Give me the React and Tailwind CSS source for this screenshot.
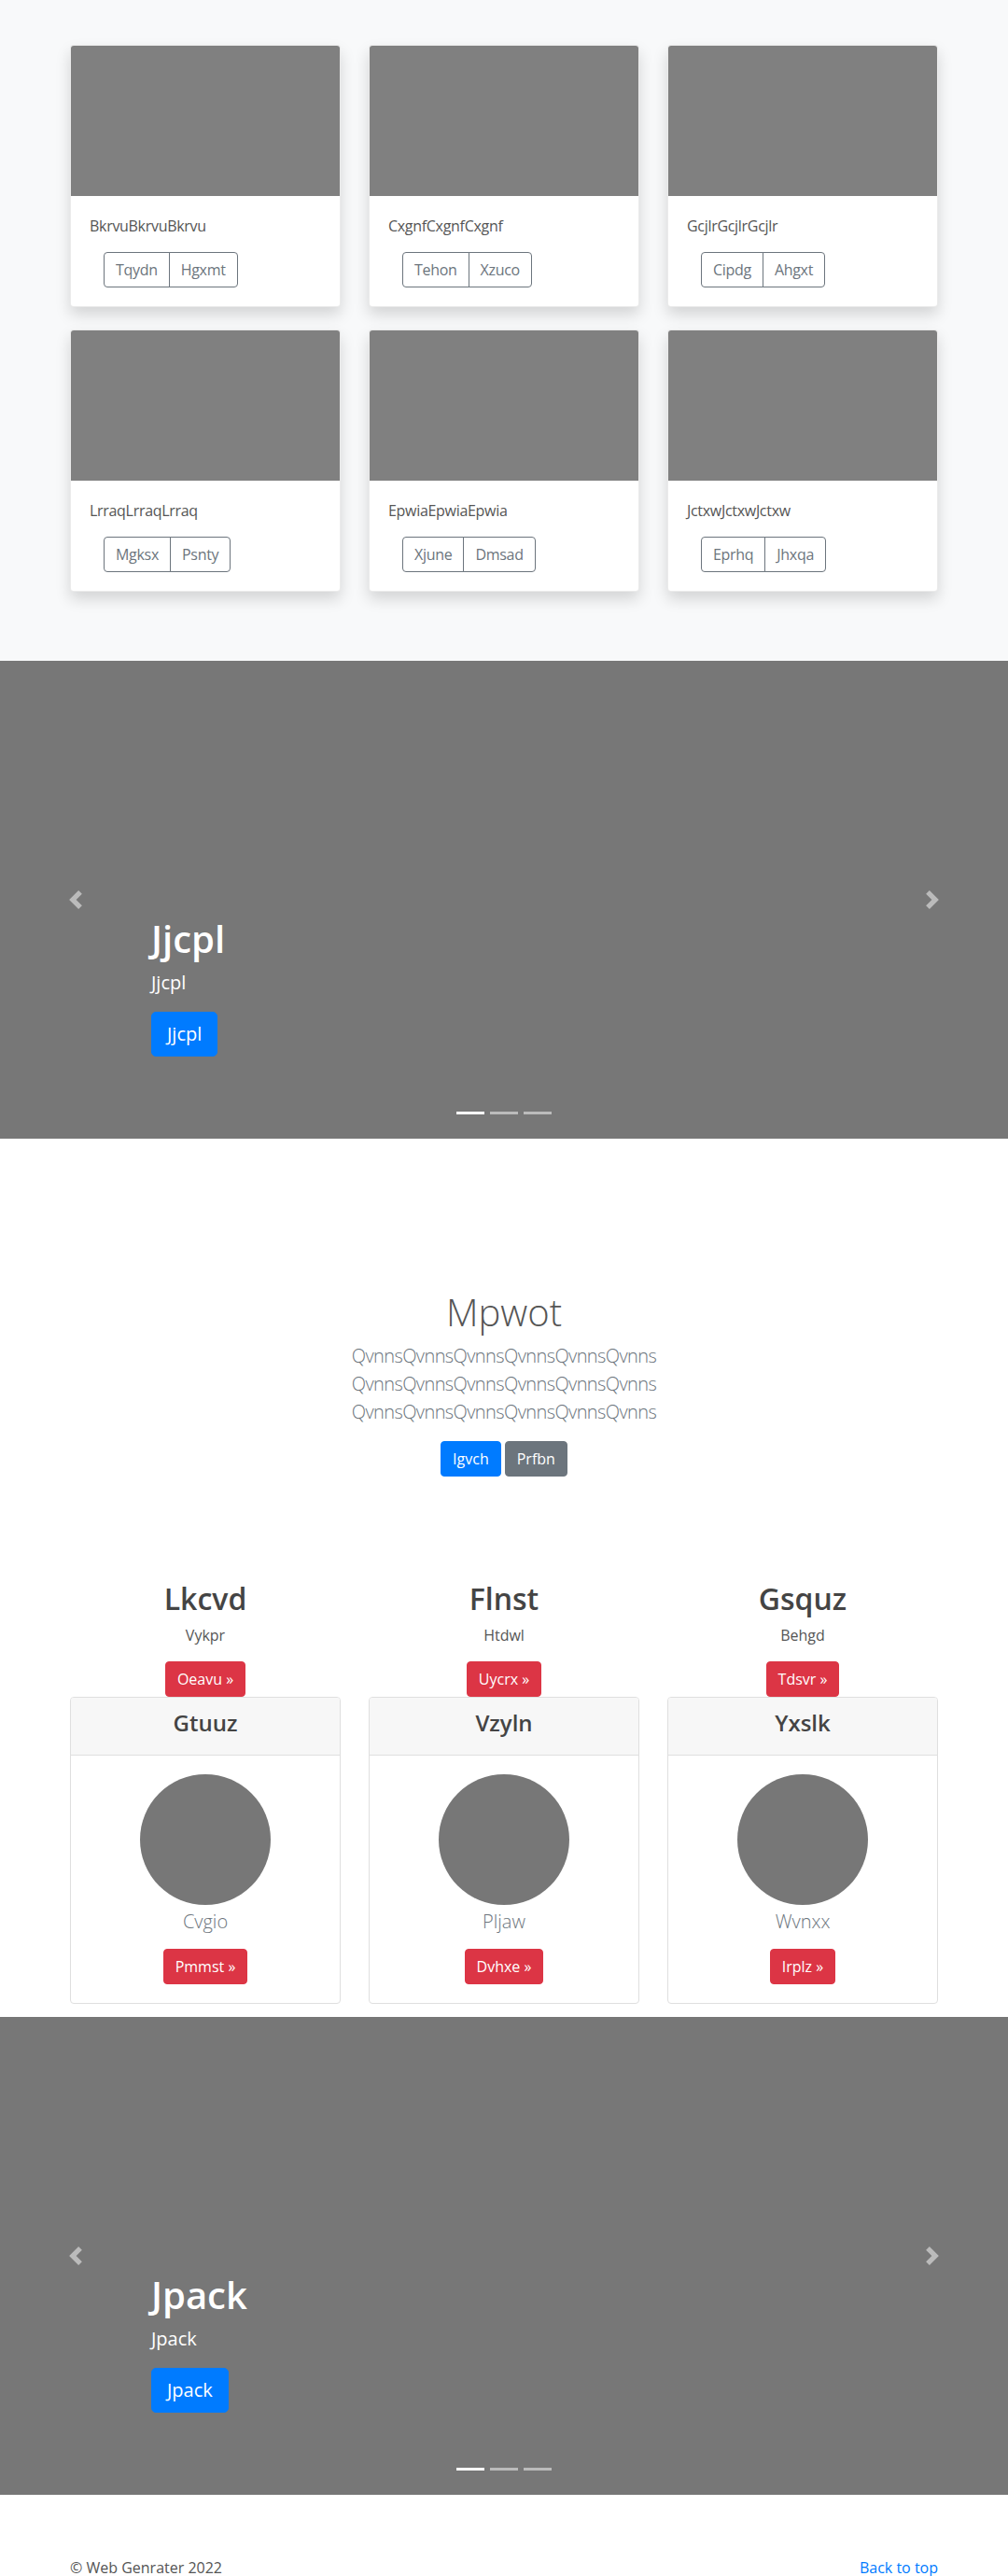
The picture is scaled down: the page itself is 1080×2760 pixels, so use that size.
import React from "react";

const albumCards = [
  { text: "BkrvuBkrvuBkrvu", a: "Tqydn", b: "Hgxmt" },
  { text: "CxgnfCxgnfCxgnf", a: "Tehon", b: "Xzuco" },
  { text: "GcjlrGcjlrGcjlr", a: "Cipdg", b: "Ahgxt" },
  { text: "LrraqLrraqLrraq", a: "Mgksx", b: "Psnty" },
  { text: "EpwiaEpwiaEpwia", a: "Xjune", b: "Dmsad" },
  { text: "JctxwJctxwJctxw", a: "Eprhq", b: "Jhxqa" },
];

const features = [
  { title: "Lkcvd", sub: "Vykpr", btn: "Oeavu", head: "Gtuuz", name: "Cvgio", btn2: "Pmmst" },
  { title: "Flnst", sub: "Htdwl", btn: "Uycrx", head: "Vzyln", name: "Pljaw", btn2: "Dvhxe" },
  { title: "Gsquz", sub: "Behgd", btn: "Tdsvr", head: "Yxslk", name: "Wvnxx", btn2: "Irplz" },
];

const AlbumCard = ({ text, a, b }) => (
  <div className="bg-white rounded-[4px] border border-black/[0.08] shadow-[0_8px_16px_rgba(0,0,0,0.15)] overflow-hidden">
    <div className="h-[161px] bg-[#808080]" />
    <div className="p-5">
      <p className="text-base leading-6 mb-4 text-[#555] tracking-[-0.3px]">{text}</p>
      <div className="ml-[15px] inline-flex">
        <button className="px-3 py-[6px] text-base leading-6 text-[#6c757d] border border-[#6c757d] rounded-l-[4px] tracking-[-0.3px]">
          {a}
        </button>
        <button className="-ml-px px-3 py-[6px] text-base leading-6 text-[#6c757d] border border-[#6c757d] rounded-r-[4px] tracking-[-0.3px]">
          {b}
        </button>
      </div>
    </div>
  </div>
);

const Chevron = ({ dir }) => (
  <svg width="20" height="20" viewBox="0 0 8 8" fill="#fff" className="opacity-50">
    {dir === "prev" ? (
      <path d="M5.25 0l-4 4 4 4 1.5-1.5L4.25 4l2.5-2.5L5.25 0z" />
    ) : (
      <path d="M2.75 0l-1.5 1.5L3.75 4l-2.5 2.5L2.75 8l4-4-4-4z" />
    )}
  </svg>
);

const Carousel = ({ title }) => (
  <div className="relative h-[512px] bg-[#777] overflow-hidden">
    <div className="absolute left-0 top-0 bottom-0 w-[15%] flex items-center justify-center">
      <Chevron dir="prev" />
    </div>
    <div className="absolute right-0 top-0 bottom-0 w-[15%] flex items-center justify-center">
      <Chevron dir="next" />
    </div>
    <div className="absolute left-[15%] right-[15%] bottom-[88px] text-white">
      <h1 className="text-[40px] leading-[48px] font-semibold mb-2">{title}</h1>
      <p className="text-xl leading-[30px] mb-4">{title}</p>
      <a className="inline-block px-4 py-2 text-xl leading-[30px] bg-[#007bff] text-white rounded-[5px] border border-[#007bff]">
        {title}
      </a>
    </div>
    <div className="absolute left-0 right-0 bottom-[26px] flex justify-center gap-[6px]">
      <span className="w-[30px] h-[3px] bg-white" />
      <span className="w-[30px] h-[3px] bg-white/50" />
      <span className="w-[30px] h-[3px] bg-white/50" />
    </div>
  </div>
);

export default function App() {
  return (
    <div className="w-[1080px] bg-white text-[#555]" style={{ fontFamily: '"Open Sans", "Noto Sans", sans-serif' }}>
      {/* album */}
      <section className="bg-[#f8f9fa] pt-12 pb-[50px]">
        <div className="w-[960px] mx-auto px-[15px] grid grid-cols-3 gap-x-[30px] gap-y-[24px] pb-[24px]">
          {albumCards.map((c) => (
            <AlbumCard key={c.text} {...c} />
          ))}
        </div>
      </section>

      <Carousel title="Jjcpl" />

      {/* jumbotron */}
      <section className="pt-[162px] text-center">
        <h1 className="text-[40px] leading-[48px] font-light text-[#555] mb-2">Mpwot</h1>
        <p className="text-xl leading-[30px] font-light text-[#6c757d] mb-4 tracking-[-0.6px]">
          QvnnsQvnnsQvnnsQvnnsQvnnsQvnns
          <br />
          QvnnsQvnnsQvnnsQvnnsQvnnsQvnns
          <br />
          QvnnsQvnnsQvnnsQvnnsQvnnsQvnns
        </p>
        <div className="flex justify-center gap-1 mt-3 mb-1">
          <a className="px-3 py-[6px] text-base leading-6 text-white bg-[#007bff] border border-[#007bff] rounded-[4px]">Igvch</a>
          <a className="px-3 py-[6px] text-base leading-6 text-white bg-[#6c757d] border border-[#6c757d] rounded-[4px]">Prfbn</a>
        </div>
      </section>

      {/* marketing */}
      <section className="pt-[108px]">
        <div className="w-[960px] mx-auto px-[15px] grid grid-cols-3 gap-x-[30px]">
          {features.map((f) => (
            <div key={f.title} className="flex flex-col items-center text-center">
              <h2 className="text-[32px] leading-[38px] font-semibold text-[#444] mb-2">{f.title}</h2>
              <p className="text-base leading-6 mb-4 text-[#555]">{f.sub}</p>
              <a className="px-3 py-[6px] text-base leading-6 text-white bg-[#dc3545] border border-[#dc3545] rounded-[4px]">
                {f.btn} »
              </a>
              <div className="w-full border border-[#dfdfdf] rounded-[4px] overflow-hidden">
                <div className="bg-[#f7f7f7] border-b border-[#dfdfdf] pt-3 pb-5">
                  <h4 className="text-2xl leading-[29px] font-semibold text-[#444]">{f.head}</h4>
                </div>
                <div className="p-5 flex flex-col items-center">
                  <div className="w-[140px] h-[140px] rounded-full bg-[#777]" />
                  <p className="mt-[3px] text-xl leading-[30px] font-light text-[#6c757d] mb-[14px]">{f.name}</p>
                  <a className="px-3 py-[6px] text-base leading-6 text-white bg-[#dc3545] border border-[#dc3545] rounded-[4px]">
                    {f.btn2} »
                  </a>
                </div>
              </div>
            </div>
          ))}
        </div>
      </section>

      <div className="mt-[14px]">
        <Carousel title="Jpack" />
      </div>

      <footer className="w-[960px] mx-auto px-[15px] pt-[66px] flex justify-between text-base leading-6 h-[88px]">
        <p className="text-[#555]">© Web Genrater 2022</p>
        <a className="text-[#007bff]">Back to top</a>
      </footer>
    </div>
  );
}
